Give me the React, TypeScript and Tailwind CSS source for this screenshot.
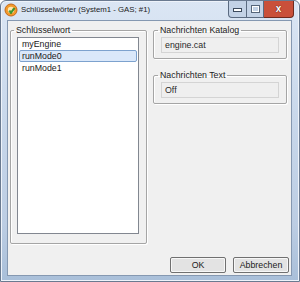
export default function App() {
  const font = "font-['Liberation_Sans',Arial,sans-serif]";
  return (
    <div className={`w-[300px] h-[282px] bg-white ${font}`}>
      <div className="w-[300px] h-[282px] flex flex-col rounded-t-[6px] border border-[#6a7a90] bg-[linear-gradient(180deg,#dbe6f4_0%,#c9d8eb_40%,#bccde3_80%,#a9bfd9_100%)] shadow-[inset_0_0_0_1px_#eef3fa]">
        {/* Title bar */}
        <div className="h-[19px] flex items-start shrink-0">
          <div className="pl-[3px] pt-[2px]">
            <svg width="14" height="14" viewBox="0 0 14 14">
              <circle cx="7" cy="7" r="6" fill="#f39a2a" stroke="#c4691a" strokeWidth="1" />
              <circle cx="7" cy="7" r="3.2" fill="#fde7b0" />
              <path d="M5 8.5 L7 11 L11 5.5 L9.5 5 L7 8.6 L6 7.3 Z" fill="#3aa02f" stroke="#2c7d22" strokeWidth="0.6" />
            </svg>
          </div>
          <div className="pl-[3px] pt-[3px] text-[7.8px] leading-[11px] text-[#1b1b1b] whitespace-nowrap">
            Schlüsselwörter (System1 - GAS; #1)
          </div>
          <div className="ml-auto mr-[5px] flex h-[17px]">
            <div className="w-[19px] h-[17px] flex items-end justify-center pb-[5px] bg-[#c3d2e6] border border-t-0 border-[#5a6a80] rounded-bl-[4px]">
              <div className="w-[7px] h-[2px] bg-white border border-[#3d4b5e] box-content" />
            </div>
            <div className="w-[17px] h-[17px] flex items-center justify-center bg-[#c3d2e6] border-b border-r border-[#5a6a80]">
              <div className="w-[7px] h-[6px] border-[1.5px] border-white shadow-[0_0_0_1px_#55657a]" />
            </div>
            <div className="w-[30px] h-[17px] flex items-center justify-center bg-[#c9503a] border-b border-r border-[#6e2a1e] rounded-br-[4px]">
              <span className="text-white text-[10px] leading-[10px] font-bold [text-shadow:0_0_1px_#5a1a10,0_0_1px_#5a1a10]">x</span>
            </div>
          </div>
        </div>
        {/* Client */}
        <div className="ml-[6px] mr-[7px] h-[256px] border border-[#8598b1] bg-[#f0f0f0] flex flex-col">
          <div className="flex pl-[2px] pt-[4px] gap-[6px]">
            <fieldset className="w-[137px] h-[219px] border border-[#a5a5a5] rounded-[2px] pl-[6px] pr-[7px] pt-[1px] shadow-[inset_1px_1px_0_#ffffff,1px_1px_0_#ffffff]">
              <legend className="ml-[-3px] px-[2px] text-[8.8px] leading-[11px] text-[#222]">Schlüsselwort</legend>
              <div className="w-[122px] h-[197px] border border-[#828790] bg-white px-[1px] text-[8.8px] text-[#1a1a1a]">
                <div className="h-[12px] leading-[12px] pl-[3px]">myEngine</div>
                <div className="h-[12px] leading-[10px] pl-[2px] border border-[#7da2ce] rounded-[2px] bg-[#dae8fa]">runMode0</div>
                <div className="h-[12px] leading-[12px] pl-[3px]">runMode1</div>
              </div>
            </fieldset>
            <div className="flex flex-col gap-[11px]">
              <fieldset className="w-[134px] border border-[#a5a5a5] rounded-[2px] pl-[7px] pr-[7px] pt-[1px] pb-[5px] shadow-[inset_1px_1px_0_#ffffff,1px_1px_0_#ffffff]">
                <legend className="ml-[-3px] px-[2px] text-[8.8px] leading-[11px] text-[#222]">Nachrichten Katalog</legend>
                <div className="w-[118px] h-[16px] border border-[#d4d4d4] bg-[#efefef] pl-[3px] text-[8.8px] leading-[14px] text-[#2a2a2a]">engine.cat</div>
              </fieldset>
              <fieldset className="w-[134px] border border-[#a5a5a5] rounded-[2px] pl-[7px] pr-[7px] pt-[1px] pb-[5px] shadow-[inset_1px_1px_0_#ffffff,1px_1px_0_#ffffff]">
                <legend className="ml-[-3px] px-[2px] text-[8.8px] leading-[11px] text-[#222]">Nachrichten Text</legend>
                <div className="w-[118px] h-[16px] border border-[#d4d4d4] bg-[#efefef] pl-[3px] text-[8.8px] leading-[14px] text-[#2a2a2a]">Off</div>
              </fieldset>
            </div>
          </div>
          <div className="mt-auto mb-[2px] flex justify-end gap-[7px] pr-[2px]">
            <button className="w-[56px] h-[16px] border border-[#707070] rounded-[2px] bg-[#e3e3e3] text-[8.8px] leading-[14px] text-[#1a1a1a] shadow-[inset_0_0_0_1px_#f7f7f7]">OK</button>
            <button className="w-[56px] h-[16px] border border-[#707070] rounded-[2px] bg-[#e3e3e3] text-[8.8px] leading-[14px] text-[#1a1a1a] shadow-[inset_0_0_0_1px_#f7f7f7]">Abbrechen</button>
          </div>
        </div>
      </div>
    </div>
  );
}
